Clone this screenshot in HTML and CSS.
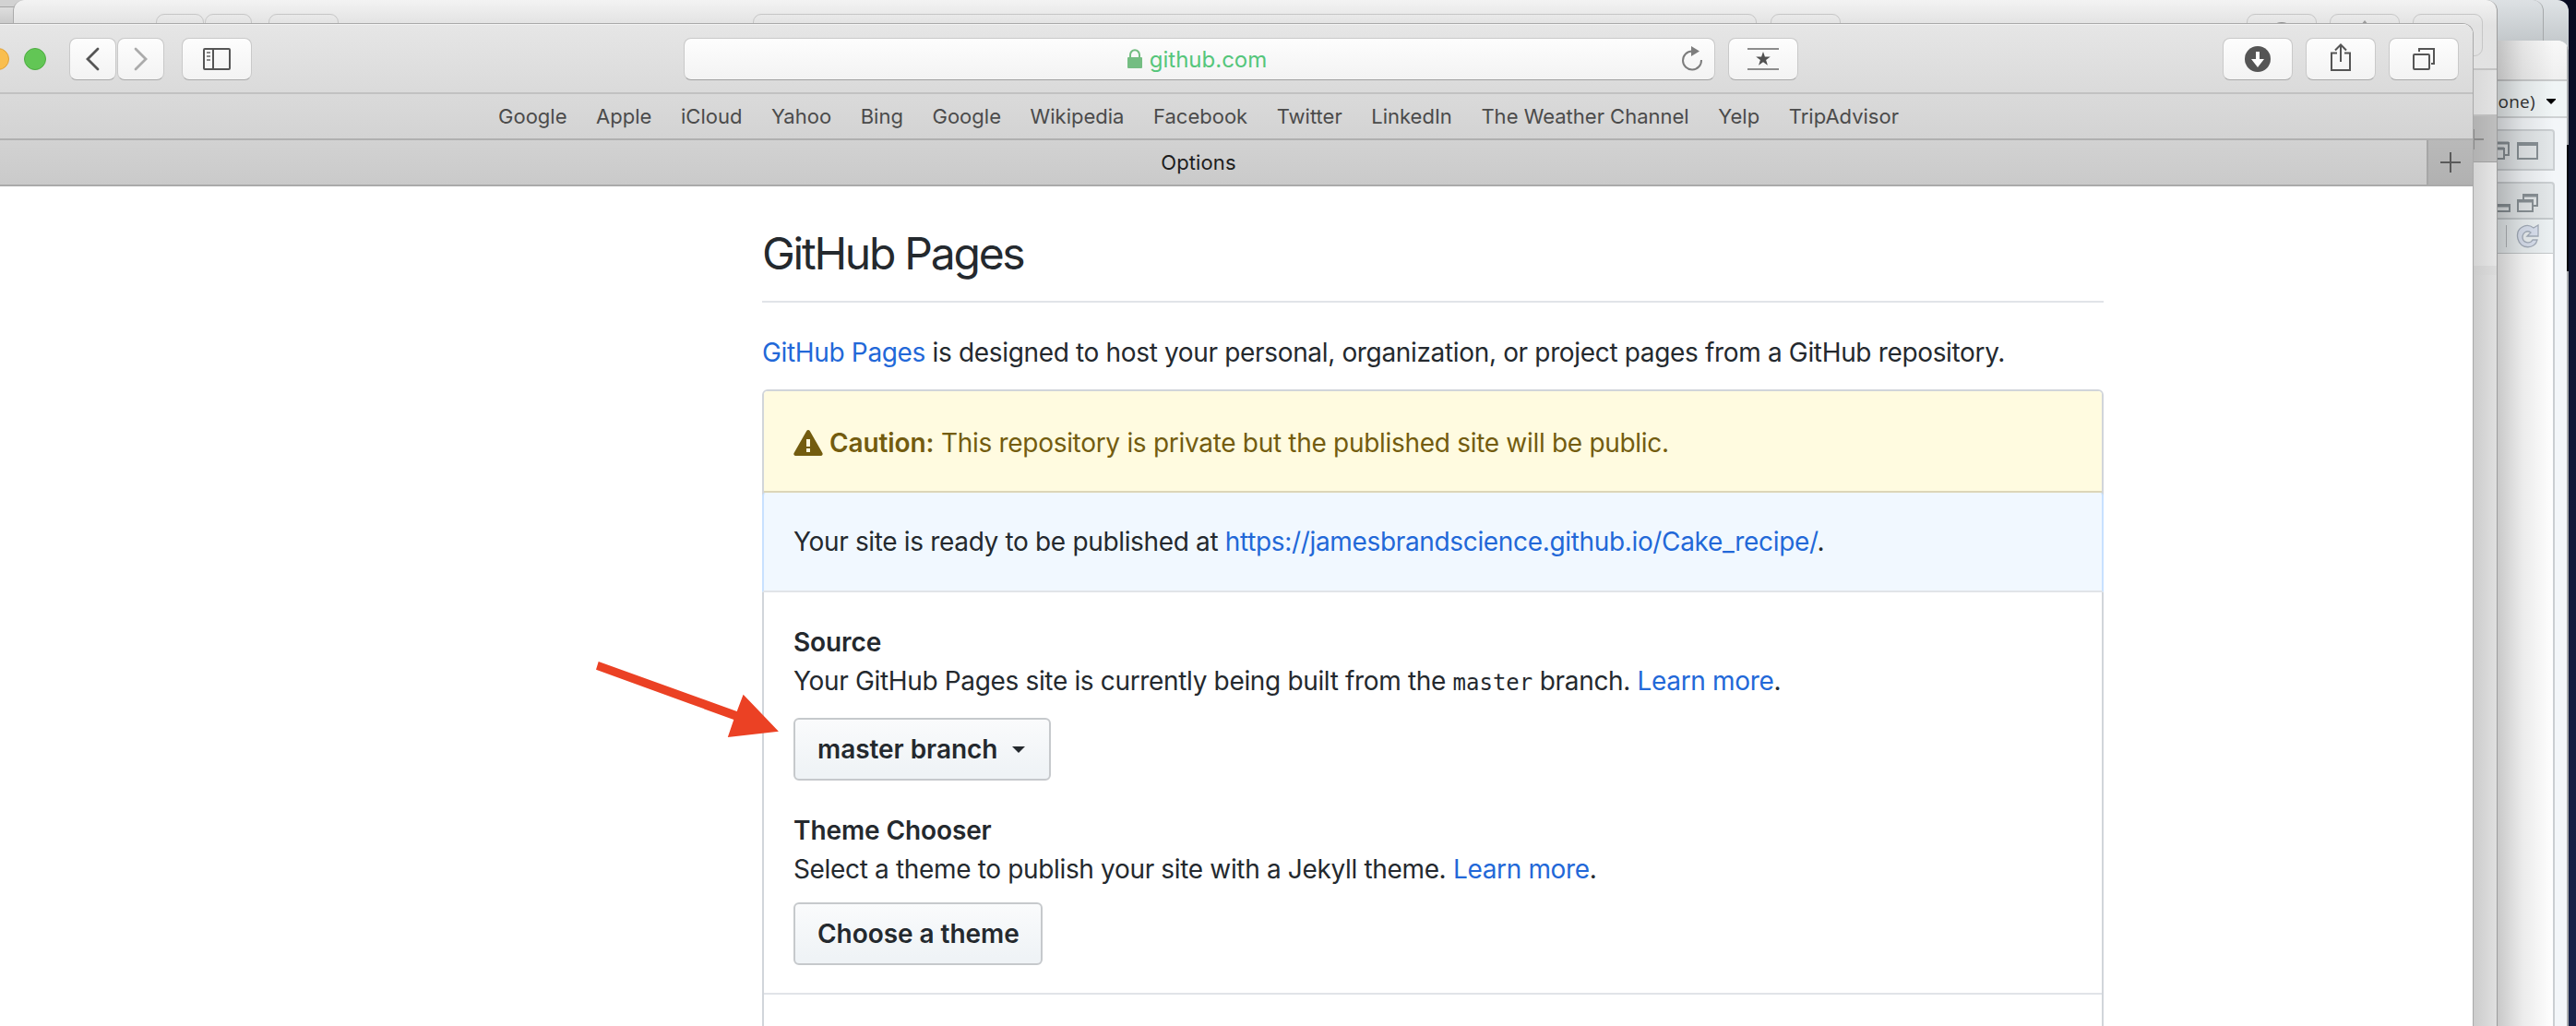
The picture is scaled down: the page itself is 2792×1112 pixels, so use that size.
FILE: index.html
```html
<!DOCTYPE html>
<html lang="en">
<head>
<meta charset="utf-8">
<title>Options</title>
<link rel="stylesheet" href="styles.css">
</head>
<body>
<div class="desktop">

  <div class="win win-far"></div>
  <div class="win win-mid"></div>

  <div class="win win-ide">
    <div class="ide-title"></div>
    <div class="ide-menu"><span>None)</span>
      <svg width="10" height="6" viewBox="0 0 10 6"><path d="M0 0h10v1L5 6 0 1z" fill="#000"/></svg>
    </div>
    <div class="ide-pane ide-pane-top">
      <svg width="48" height="24" viewBox="0 0 48 24" fill="none" stroke="#8a9297" stroke-width="2">
        <path d="M0 4h15v13h-4M0 10h10v11H0"/><path d="M0 4h15M0 10h10" stroke-width="3"/>
        <path d="M25 4h21v17H25z"/><path d="M24 5h23" stroke-width="4"/>
      </svg>
    </div>
    <div class="ide-pane ide-pane-main">
      <div class="ide-head">
        <svg width="48" height="24" viewBox="0 0 48 24" fill="none" stroke="#8a9297" stroke-width="2">
          <path d="M0 14h16v7H0"/><path d="M0 15h16" stroke-width="3"/>
          <path d="M31 8V3h15v12h-5M25 9h16v12H25z"/><path d="M30 4h16M25 10h16" stroke-width="3"/>
        </svg>
      </div>
      <div class="ide-sub">
        <i></i>
        <svg width="26" height="26" viewBox="0 0 26 26"><path d="M24 1v12H12l4-4c-4-3-9 0-9 5 0 6 8 8 11 3h5c-2 10-18 11-21-1C-1 4 11-2 19 4z" fill="#dbe2f0" stroke="#a5aebb" stroke-width="1.3"/></svg>
      </div>
      <div class="ide-body"></div>
    </div>
    <div class="ide-edge"></div>
    <div class="ide-shade"></div>
  </div>

  <div class="win win-left"></div>

  <div class="win win-back">
    <div class="ghost ghost-a"></div>
    <div class="ghost ghost-b"></div>
    <div class="ghost ghost-c"></div>
    <div class="ghost ghost-d"></div>
    <div class="ghost ghost-e"></div>
    <div class="ghost ghost-f"><b></b></div>
    <div class="ghost ghost-g"><svg width="8" height="5" viewBox="0 0 8 5"><path d="M4 0l4 5H0z" fill="#999"/></svg></div>
    <div class="ghost ghost-h"></div>
    <div class="back-edge">
      <div class="be-bar"></div>
      <div class="be-fav"></div>
      <div class="be-tab"><svg width="26" height="48" viewBox="0 0 26 48"><path d="M0 25h12M1 14v22" stroke="#8a8a8a" stroke-width="2"/></svg></div>
      <div class="be-page"></div>
      <div class="be-band"></div>
      <div class="be-rest"></div>
    </div>
  </div>

  <div class="win win-front">
    <header class="toolbar">
      <span class="light red"></span><span class="light yellow"></span><span class="light green"></span>
      <div class="nav">
        <button class="tb nav-btn"><svg width="16" height="26" viewBox="0 0 16 26"><path d="M13 2L2 13l11 11" fill="none" stroke="#555" stroke-width="2.8" stroke-linecap="round"/></svg></button>
        <button class="tb nav-btn"><svg width="16" height="26" viewBox="0 0 16 26"><path d="M2 2l11 11L2 24" fill="none" stroke="#ababab" stroke-width="2.8" stroke-linecap="round"/></svg></button>
      </div>
      <button class="tb side-btn"><svg width="30" height="24" viewBox="0 0 30 24" fill="none" stroke="#555" stroke-width="2"><rect x="1" y="1" width="28" height="22" rx="1"/><path d="M11 1v22"/><path d="M4 5h4M4 9h4M4 13h4" stroke="#8b8b8b"/></svg></button>
      <div class="address">
        <svg class="lock" width="16" height="21" viewBox="0 0 16 21"><rect y="9" width="16" height="12" rx="1" fill="#74bd82"/><path d="M3 10V6.500a5 5.300 0 0 1 10 0V10" fill="none" stroke="#74bd82" stroke-width="2"/></svg>
        <span>github.com</span>
        <svg class="reload" width="24" height="28" viewBox="0 0 24 28"><path d="M12 5.500A10 10 0 1 0 22 15" fill="none" stroke="#7d7d7d" stroke-width="2"/><path d="M11 0l9 5.500-9 5.500z" fill="#7d7d7d"/></svg>
      </div>
      <button class="tb star-btn"><svg width="34" height="24" viewBox="0 0 34 24"><path d="M0 1h34M0 23h34" stroke="#8c8c8c" stroke-width="2"/><path d="M17 4l1.900 5.500h5.900l-4.700 3.500 1.800 5.700-4.900-3.500-4.900 3.500 1.800-5.700-4.700-3.500h5.900z" fill="#505050"/></svg></button>
      <div class="actions">
        <button class="tb"><svg width="28" height="28" viewBox="0 0 28 28"><circle cx="14" cy="14" r="14" fill="#555"/><path d="M12 6h4v8h5l-7 9-7-9h5z" fill="#fff"/></svg></button>
        <button class="tb"><svg class="share" width="24" height="32" viewBox="0 0 24 32" fill="none" stroke="#555" stroke-width="2"><path d="M8 11.500H2V30h20V11.500h-6M12 21V3M6 8.500L12 2.500l6 6"/></svg></button>
        <button class="tb"><svg width="24" height="24" viewBox="0 0 24 24" fill="none" stroke="#555" stroke-width="2"><rect x="1" y="7" width="17" height="16" rx="1"/><path d="M7 4V1h16v16h-3"/></svg></button>
      </div>
    </header>
    <nav class="favorites">
      <a>Google</a><a>Apple</a><a>iCloud</a><a>Yahoo</a><a>Bing</a><a>Google</a><a>Wikipedia</a><a>Facebook</a><a>Twitter</a><a>LinkedIn</a><a>The Weather Channel</a><a>Yelp</a><a>TripAdvisor</a>
    </nav>
    <div class="tabs">
      <span>Options</span>
      <div class="new-tab"><svg width="22" height="22" viewBox="0 0 22 22"><path d="M0 11h22M11 0v22" stroke="#5a5a5a" stroke-width="2"/></svg></div>
    </div>
    <main class="page">
      <h2>GitHub Pages</h2>
      <p class="intro"><a>GitHub Pages</a> is designed to host your personal, organization, or project pages from a GitHub repository.</p>
      <section class="box">
        <div class="row caution">
          <svg width="32" height="32" viewBox="0 0 16 16"><path fill="#735c0f" fill-rule="evenodd" d="M8.865 1.520c-.18-.31-.51-.5-.87-.5s-.69.190-.87.500L.275 13.500c-.18.310-.18.690 0 1 .190.310.520.500.870.500h13.700c.360 0 .690-.19.860-.5.170-.31.180-.69.010-1L8.865 1.520zM8.995 13h-2v-2h2v2zm0-3h-2V6h2v4z"/></svg>
          <p><strong>Caution:</strong> This repository is private but the published site will be public.</p>
        </div>
        <div class="row ready"><p>Your site is ready to be published at <a>https://jamesbrandscience.github.io/Cake_recipe/</a>.</p></div>
        <div class="row settings">
          <h4>Source</h4>
          <p>Your GitHub Pages site is currently being built from the <code>master</code> branch. <a>Learn more</a>.</p>
          <button class="btn branch">master branch <i class="caret"></i></button>
          <h4>Theme Chooser</h4>
          <p>Select a theme to publish your site with a Jekyll theme. <a>Learn more</a>.</p>
          <button class="btn theme">Choose a theme</button>
        </div>
      </section>
    </main>
  </div>

  <svg class="pointer" width="200" height="84" viewBox="0 0 200 84"><path d="M2.700 1L152.700 55l6.900-18.300L197.900 76.700 142.800 83l6.500-19L0 9.700z" fill="#eb4124"/></svg>
</div>
</body>
</html>
```
FILE: styles.css
```css
* { box-sizing: border-box; }
body { margin: 0; font-family: Inter, "Liberation Sans", sans-serif; color: #24292e; }
svg { display: block; flex: none; }
p, h2, h4 { margin: 0; }
button { font: inherit; color: inherit; margin: 0; padding: 0; }

.desktop { position: relative; width: 2792px; height: 1112px; overflow: hidden; background: linear-gradient(#070b20, #0f1532 30%, #19234a); }
.win { position: absolute; overflow: hidden; }

/* windows stacked behind the browser */
.win-far { left: 2600px; top: 0; width: 184px; height: 157px; border-radius: 0 12px 0 0; background: linear-gradient(#dfe3e6, #c5cacd 44px, #d5d8da); }
.win-mid { left: 2600px; top: 0; width: 157px; height: 44px; border-radius: 0 12px 0 0; border-right: 1px solid #a5a8aa; background: linear-gradient(#dde1e4, #c3c8cb); }
.win-left { left: 0; top: 0; width: 30px; height: 26px; background: linear-gradient(#d2d2d2 0 7px, #a5a5a5 7px 8px, #dedede 8px, #c9c9c9); }

.win-ide { left: 2600px; top: 44px; width: 184px; height: 1068px; border-radius: 0 12px 0 0; background: #f3f6f9; display: flex; flex-direction: column; }
.ide-title { height: 44px; flex: none; border-bottom: 2px solid #c9cbcc; background: linear-gradient(#f8f8f8, #efefef); }
.ide-menu { height: 40px; flex: none; display: flex; align-items: center; gap: 12px; padding: 5px 0 0 90px; border-bottom: 2px solid #cfd2d4; background: #f0f5f6; font: 19px "Open Sans", sans-serif; color: #333; }
.ide-menu span { width: 58px; display: flex; justify-content: flex-end; letter-spacing: .3px; }
.ide-pane { width: 169px; flex: none; border: 2px solid #cbcfd2; border-left: 0; border-radius: 0 4px 0 0; background: #e4e8ea; }
.ide-pane-top { height: 45px; margin-top: 12px; padding: 9px 0 0 104px; }
.ide-pane-main { flex: 1; margin-top: 12px; border-bottom: 0; display: flex; flex-direction: column; }
.ide-head { height: 39px; padding: 9px 0 0 104px; border-bottom: 2px solid #c6cbce; flex: none; }
.ide-sub { height: 37px; flex: none; display: flex; align-items: center; gap: 10px; padding-left: 116px; border-bottom: 1px solid #c6cacc; background: #edf2f4; }
.ide-sub i { width: 1px; height: 24px; background: #b5b9bc; }
.ide-body { flex: 1; background: #fff; }
.ide-edge { position: absolute; right: 0; top: 0; width: 2px; height: 1068px; background: linear-gradient(#a9acae 0 113px, #03050c 113px 250px, #a9abad 250px); }
.ide-shade { position: absolute; left: 106px; top: 0; width: 62px; height: 1068px; background: linear-gradient(90deg, rgba(0,0,0,.22), rgba(0,0,0,.08) 45%, rgba(0,0,0,0)); }

.win-back { left: 14px; top: 0; width: 2693px; height: 1112px; border-radius: 12px 12px 0 0; border-left: 1px solid #aaa; border-right: 1px solid #9d9d9d; background: linear-gradient(#f3f3f3, #e2e2e2 27px, #e6e6e6); }
.ghost { position: absolute; top: 15px; height: 46px; border: 1px solid #c6c6c6; border-radius: 9px; }
.ghost-a { left: 154px; width: 52px; }
.ghost-b { left: 207px; width: 51px; }
.ghost-c { left: 276px; width: 76px; }
.ghost-d { left: 801px; width: 1088px; }
.ghost-e { left: 1904px; width: 76px; }
.ghost-f { left: 2420px; width: 76px; display: flex; justify-content: center; overflow: hidden; }
.ghost-f b { width: 28px; height: 28px; margin-top: 8px; border-radius: 50%; background: #909090; }
.ghost-g { left: 2510px; width: 76px; display: flex; justify-content: center; padding-top: 6px; }
.ghost-h { left: 2600px; width: 76px; }
.back-edge { position: absolute; right: 0; top: 61px; width: 26px; height: 1051px; display: flex; flex-direction: column; }
.be-bar { height: 15px; flex: none; border-bottom: 2px solid #c3c3c3; }
.be-fav { height: 50px; flex: none; border-bottom: 2px solid #bdbdbd; background: linear-gradient(90deg, #d9d9d9, #e3e3e3); }
.be-tab { height: 50px; flex: none; border-bottom: 1px solid #9f9f9f; background: linear-gradient(90deg, #b1b1b1, #bebebe); }
.be-page { height: 112px; flex: none; background: linear-gradient(90deg, #d3d3d3, #e6e6e6); }
.be-band { height: 10px; flex: none; background: linear-gradient(90deg, #cbcbcb, #dcdcdc); }
.be-rest { flex: 1; background: linear-gradient(90deg, #cbcbcb, #e0e0e0); }

/* browser window */
.win-front { left: -80px; top: 25px; width: 2761px; height: 1087px; border: 1px solid #a9a9a9; border-bottom: 0; border-left: 0; border-radius: 12px 12px 0 0; background: #fff; display: flex; flex-direction: column; }
.toolbar { height: 76px; flex: none; display: flex; align-items: center; padding-left: 26px; border-top: 1px solid #f3f3f3; border-bottom: 2px solid #c1c1c1; background: linear-gradient(#e6e6e6, #dadada); }
.light { width: 24px; height: 24px; margin-right: 16px; border-radius: 50%; border: 1px solid; flex: none; }
.red { background: #f25e57; border-color: #d9483f; }
.yellow { background: #f9be4f; border-color: #dfa036; }
.green { background: #62c655; border-color: #4dac41; }
.nav { display: flex; gap: 1px; margin-left: 9px; }
.tb { width: 76px; height: 46px; flex: none; display: flex; align-items: center; justify-content: center; border: 1px solid #c9c9c9; border-bottom-color: #a9a9a9; border-radius: 8px; background: linear-gradient(#fdfdfd, #f3f3f3); }
.nav-btn { width: 51px; }
.side-btn { margin-left: 19px; }
.address { position: relative; width: 1118px; height: 46px; margin-left: 468px; flex: none; display: flex; align-items: center; justify-content: center; gap: 8px; padding-right: 5px; border: 1px solid #c9c9c9; border-bottom-color: #a0a0a0; border-radius: 8px; background: linear-gradient(#fdfdfd, #f3f3f3); font-size: 24px; color: #55c67b; }
.address span { padding-top: 2px; }
.reload { position: absolute; right: 12px; top: 8px; }
.star-btn { margin-left: 14px; }
.actions { display: flex; gap: 14px; margin-left: 460px; }
.share { margin-top: -3px; }
.favorites { height: 50px; flex: none; display: flex; align-items: center; justify-content: center; gap: 31.600px; padding-right: 2px; border-bottom: 2px solid #b0b0b0; background: linear-gradient(#dadada, #d3d3d3); font-size: 22px; color: #4b4b4b; }
.tabs { position: relative; height: 50px; flex: none; display: flex; align-items: center; justify-content: center; padding-right: 2px; border-bottom: 2px solid #aaa; background: linear-gradient(#d2d2d2, #cacaca); font-size: 22px; letter-spacing: .1px; color: #1d1d1d; }
.new-tab { position: absolute; right: 0; top: 0; width: 50px; height: 48px; display: flex; align-items: center; justify-content: center; border-left: 2px solid #a6a6a6; background: linear-gradient(#b9b9b9, #b1b1b1); }

/* settings page */
.page { width: 1454px; margin-left: 906px; padding-top: 37px; font-size: 28px; line-height: 42px; letter-spacing: -.34px; white-space: nowrap; }
.page a { color: #2268d8; }
h2 { font-size: 48px; font-weight: 400; line-height: 72px; letter-spacing: -2.250px; padding-bottom: 15px; border-bottom: 2px solid #e1e4e8; }
.intro { margin: 33px 0 19px; }
.box { height: 720px; border: 2px solid #d1d5da; border-radius: 6px 6px 0 0; }
.row { padding: 32px; }
.caution { height: 110px; display: flex; align-items: center; gap: 7px; border-bottom: 2px solid #dcd6b8; border-radius: 4px 4px 0 0; background: #fffbe0; color: #735c0f; letter-spacing: -.3px; }
.caution svg { margin-top: 3px; }
.caution p { padding-top: 3px; }
strong, h4 { font-weight: 600; letter-spacing: -.1px; }
.ready { height: 108px; margin: 0 -2px; padding-left: 34px; border: solid #c8e1ff; border-width: 0 2px; border-bottom: 2px solid #e1e4e8; border-radius: 4px 4px 0 0; background: #f1f8ff; }
.ready { padding-left: 32px; }
.settings { height: 436px; padding-top: 33px; border-bottom: 2px solid #e1e4e8; }
h4 { font-size: 28px; }
code { font: 24px "DejaVu Sans Mono", monospace; letter-spacing: 0; }
.btn { display: flex; align-items: center; height: 68px; padding: 0 24px; border: 2px solid #c6c9cc; border-radius: 6px; background: linear-gradient(#fafbfc, #eff3f6 90%); font-weight: 600; letter-spacing: -.05px; }
.branch { width: 279px; margin: 19px 0 33px; }
.theme { width: 270px; margin-top: 15px; }
.caret { margin-left: 16px; border: 7.500px solid transparent; border-top-color: #24292e; border-bottom: 0; }

.pointer { position: absolute; left: 646px; top: 716px; }
```
